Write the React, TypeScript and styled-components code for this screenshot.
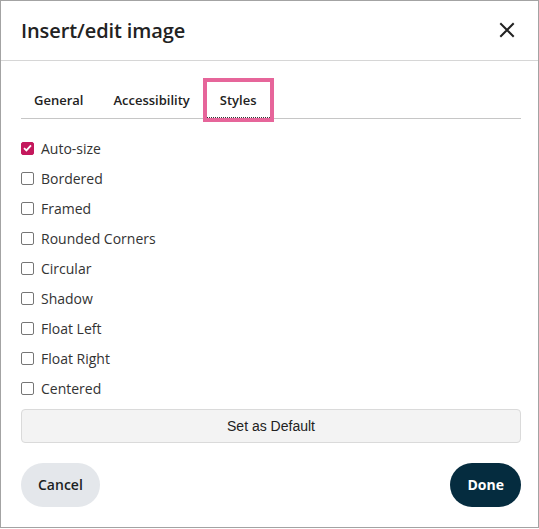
import styled, { createGlobalStyle } from 'styled-components';

const GlobalStyle = createGlobalStyle`
    html, body {
        margin: 0;
        padding: 0;
        background: #ffffff;
    }
    * {
        box-sizing: border-box;
    }
`;

const Dialog = styled.div`
    width: 539px;
    height: 528px;
    border: 1px solid #a3a3a3;
    background: #ffffff;
    display: flex;
    flex-direction: column;
    font-family: 'Open Sans', 'Noto Sans', sans-serif;
    color: #222f3e;
`;

const Header = styled.div`
    height: 60px;
    flex-shrink: 0;
    display: flex;
    align-items: center;
    justify-content: space-between;
    padding: 0 18px 1px 20px;
    border-bottom: 1px solid #d6d6d6;
`;

const Title = styled.h1`
    margin: 0;
    font-size: 20px;
    font-weight: 600;
    color: #222222;
    letter-spacing: -0.1px;
`;

const CloseButton = styled.button`
    width: 26px;
    height: 26px;
    border: none;
    background: none;
    padding: 0;
    display: flex;
    align-items: center;
    justify-content: center;
`;

const Body = styled.div`
    flex: 1;
    padding: 21px 17px 0 20px;
    display: flex;
    flex-direction: column;
`;

const TabBar = styled.div`
    display: flex;
    gap: 4px;
    border-bottom: 1px solid #c6c6c6;
`;

const Tab = styled.div<{ $active?: boolean }>`
    height: 36px;
    padding: 0 13px;
    display: flex;
    align-items: center;
    font-size: 13px;
    font-weight: 600;
    color: #222222;
    ${(p) =>
        p.$active &&
        `
        outline: 4px solid #e6659a;
        border-bottom: 1px dotted #333333;
        margin-bottom: -1px;
    `}
`;

const OptionList = styled.div`
    display: flex;
    flex-direction: column;
    margin-top: 14px;
`;

const Option = styled.label`
    height: 30px;
    display: flex;
    align-items: center;
    gap: 7px;
    font-size: 14px;
    color: #333333;
`;

const Box = styled.span<{ $checked?: boolean }>`
    width: 13px;
    height: 13px;
    border-radius: 2px;
    border: 1px solid ${(p) => (p.$checked ? '#c4185c' : '#767676')};
    background: ${(p) => (p.$checked ? '#c4185c' : '#ffffff')};
    display: flex;
    align-items: center;
    justify-content: center;
`;

const DefaultButton = styled.button`
    margin-top: 6px;
    height: 34px;
    width: 500px;
    border: 1px solid #dadada;
    border-radius: 4px;
    background: #f3f3f3;
    font-family: 'Liberation Sans', Arial, sans-serif;
    font-size: 14px;
    color: #222222;
`;

const Footer = styled.div`
    display: flex;
    justify-content: space-between;
    width: 500px;
    margin-top: 20px;
`;

const PillButton = styled.button<{ $primary?: boolean }>`
    height: 44px;
    padding: 0 17px 1px;
    border: none;
    border-radius: 22px;
    font-family: 'Open Sans', 'Noto Sans', sans-serif;
    font-size: 14px;
    font-weight: ${(p) => (p.$primary ? 700 : 600)};
    background: ${(p) => (p.$primary ? '#052c3f' : '#e4e7eb')};
    color: ${(p) => (p.$primary ? '#ffffff' : '#1b1f24')};
`;

const options = [
    { label: 'Auto-size', checked: true },
    { label: 'Bordered' },
    { label: 'Framed' },
    { label: 'Rounded Corners' },
    { label: 'Circular' },
    { label: 'Shadow' },
    { label: 'Float Left' },
    { label: 'Float Right' },
    { label: 'Centered' },
];

function App() {
    return (
        <>
            <GlobalStyle />
            <Dialog>
                <Header>
                    <Title>Insert/edit image</Title>
                    <CloseButton>
                        <svg width="16" height="16" viewBox="0 0 16 16">
                            <path
                                d="M2 2 L14 14 M14 2 L2 14"
                                stroke="#222222"
                                strokeWidth="2"
                                strokeLinecap="square"
                            />
                        </svg>
                    </CloseButton>
                </Header>
                <Body>
                    <TabBar>
                        <Tab>General</Tab>
                        <Tab>Accessibility</Tab>
                        <Tab $active>Styles</Tab>
                    </TabBar>
                    <OptionList>
                        {options.map((o) => (
                            <Option key={o.label}>
                                <Box $checked={o.checked}>
                                    {o.checked && (
                                        <svg width="9" height="8" viewBox="0 0 9 8">
                                            <path
                                                d="M1 4.2 L3.4 6.4 L8 1.4"
                                                stroke="#ffffff"
                                                strokeWidth="1.8"
                                                fill="none"
                                            />
                                        </svg>
                                    )}
                                </Box>
                                {o.label}
                            </Option>
                        ))}
                    </OptionList>
                    <DefaultButton>Set as Default</DefaultButton>
                    <Footer>
                        <PillButton>Cancel</PillButton>
                        <PillButton $primary>Done</PillButton>
                    </Footer>
                </Body>
            </Dialog>
        </>
    );
}

export default App;
